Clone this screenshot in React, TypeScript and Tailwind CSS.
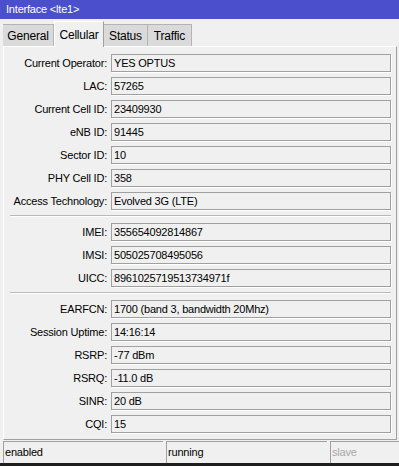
import type { ReactNode } from "react";

const groups: [string, string][][] = [
  [
    ["Current Operator", "YES OPTUS"],
    ["LAC", "57265"],
    ["Current Cell ID", "23409930"],
    ["eNB ID", "91445"],
    ["Sector ID", "10"],
    ["PHY Cell ID", "358"],
    ["Access Technology", "Evolved 3G (LTE)"],
  ],
  [
    ["IMEI", "355654092814867"],
    ["IMSI", "505025708495056"],
    ["UICC", "8961025719513734971f"],
  ],
  [
    ["EARFCN", "1700 (band 3, bandwidth 20Mhz)"],
    ["Session Uptime", "14:16:14"],
    ["RSRP", "-77 dBm"],
    ["RSRQ", "-11.0 dB"],
    ["SINR", "20 dB"],
    ["CQI", "15"],
  ],
];

const tabs = [
  { label: "General", w: "w-[51px]" },
  { label: "Cellular", w: "w-[50px]", active: true },
  { label: "Status", w: "w-[44px]" },
  { label: "Traffic", w: "w-[44px]" },
];

export default function App() {
  return (
    <div className="w-[399px] h-[466px] bg-[#f0f0f0] flex flex-col overflow-hidden text-black font-['Liberation_Sans',Arial,sans-serif] text-[11px] tracking-[-0.2px]">
      <div className="h-[19px] shrink-0 bg-[#4b4fcb] text-white text-[11px] pl-[6px] flex items-center">
        Interface &lt;lte1&gt;
      </div>

      <div className="h-[27px] shrink-0 flex items-end pl-[3px]">
        {tabs.map((t) =>
          t.active ? (
            <div
              key={t.label}
              className={`${t.w} h-[26px] -mb-px relative z-10 bg-[#f0f0f0] border-t border-l border-white border-r border-r-[#a0a0a0] flex items-center justify-center text-[12px]`}
            >
              {t.label}
            </div>
          ) : (
            <div
              key={t.label}
              className={`${t.w} h-[22px] bg-[#dadada] border-t border-r border-[#b4b4b4] flex items-center justify-center text-[12px]`}
            >
              {t.label}
            </div>
          ),
        )}
      </div>

      <div className="mx-[3px] w-[394px] h-[394px] shrink-0 border-t border-l border-white border-r border-b border-r-[#a0a0a0] border-b-[#a0a0a0] pt-[7px]">
        {groups.map((rows, gi) => (
          <div key={gi}>
            {gi > 0 ? <Divider /> : null}
            <div className="flex flex-col gap-[5px]">
              {rows.map(([label, value]) => (
                <Row key={label} label={label}>
                  {value}
                </Row>
              ))}
            </div>
          </div>
        ))}
      </div>

      <div className="h-[23px] shrink-0 flex items-stretch pt-px">
        <Cell className="ml-[3px] w-[160px]">enabled</Cell>
        <Cell className="ml-[3px] w-[161px]">running</Cell>
        <Cell className="ml-[3px] flex-1 text-[#a8a8a8]">slave</Cell>
      </div>
      <div className="flex-1 bg-[#1e1e1e]" />
    </div>
  );
}

function Row({ label, children }: { label: string; children: ReactNode }) {
  return (
    <div className="flex items-center h-[18px]">
      <div className="w-[104px] text-right pr-px whitespace-nowrap">{label}:</div>
      <div className="ml-[3px] w-[280px] h-[18px] border border-[#a0a0a0] shadow-[1px_1px_0_#ffffff] pl-[2px] flex items-center whitespace-nowrap">
        {children}
      </div>
    </div>
  );
}

function Divider() {
  return (
    <div className="h-[13px] pt-[5px] pl-[6px] pr-[5px]">
      <div className="border-t border-[#b9b9b9] border-b border-b-white" />
    </div>
  );
}

function Cell({ className, children }: { className: string; children: ReactNode }) {
  return (
    <div
      className={`${className} border-t border-l border-[#a0a0a0] pl-px flex items-center`}
    >
      {children}
    </div>
  );
}
